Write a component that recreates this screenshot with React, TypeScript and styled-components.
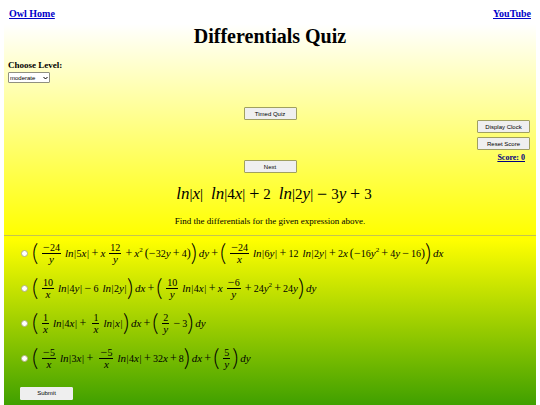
import React from "react";
import styled, { createGlobalStyle, css } from "styled-components";

const GlobalStyle = createGlobalStyle`
  * { box-sizing: border-box; }
  body {
    margin: 0;
    background: #fff;
    color: #000;
    font-family: "Liberation Serif", "Times New Roman", serif;
  }
`;

const Page = styled.div`
  display: flex;
  flex-direction: column;
  height: 100vh;
  margin: 0 4px;
  overflow: hidden;
`;

const Upper = styled.section`
  background: linear-gradient(#fff 24px, #ff0 100%);
`;

const Nav = styled.nav`
  display: flex;
  justify-content: space-between;
  padding: 8px 5px 0;
`;

const NavLink = styled.a`
  color: #0000c8;
  font-size: 10px;
  font-weight: bold;
  line-height: 12px;
`;

const Title = styled.h1`
  margin: 4px 0 12px;
  font-size: 20px;
  line-height: 24px;
  text-align: center;
`;

const Level = styled.div`
  display: flex;
  flex-direction: column;
  align-items: flex-start;
  gap: 1px;
  padding-left: 4px;
`;

const LevelLabel = styled.label`
  font-size: 9px;
  font-weight: bold;
  line-height: 11px;
`;

const SelectBox = styled.div`
  display: grid;
  align-items: center;

  > * { grid-area: 1 / 1; }
`;

const Select = styled.select`
  appearance: none;
  width: 42px;
  height: 11px;
  padding: 0 1px;
  border: 1px solid #909080;
  border-radius: 1px;
  background: #fff;
  color: #000;
  font-family: "Liberation Sans", Arial, sans-serif;
  font-size: 6px;
`;

const Chevron = styled.svg`
  justify-self: end;
  margin-right: 2px;
  pointer-events: none;
`;

const Controls = styled.div`
  display: grid;
  grid-template-columns: 1fr auto 1fr;
  padding: 24px 6px 0;
`;

const Centre = styled.div`
  display: flex;
  grid-column: 2;
  flex-direction: column;
  gap: 40px;
`;

const Side = styled.div`
  display: flex;
  flex-direction: column;
  align-items: flex-end;
  gap: 4px;
  padding-top: 13px;
`;

const Button = styled.button<{ $flat?: boolean }>`
  width: 53px;
  height: 13px;
  padding: 0;
  border: 1px solid ${(p) => (p.$flat ? "#efefef" : "#a0a060")};
  border-radius: 1px;
  background: #efefef;
  color: #000;
  font-family: "Liberation Sans", Arial, sans-serif;
  font-size: 6px;
  line-height: 10px;
`;

const Score = styled.div`
  padding-right: 5px;
  color: #000080;
  font-size: 8px;
  font-weight: bold;
  line-height: 8px;
  text-decoration: underline;
`;

const Prompt = styled.p`
  margin: 12px 0 8px;
  font-size: 9px;
  line-height: 12px;
  text-align: center;
`;

const Rule = styled.hr`
  margin: 0;
  border: 0;
  border-top: 1px solid #c4c450;
`;

const Lower = styled.form`
  flex: 1;
  background: linear-gradient(#ff0 4px, #008000 224px);
`;

const Option = styled.label`
  display: flex;
  align-items: center;
  gap: 4px;
  height: 35px;
  padding-left: 17px;
`;

const Radio = styled.input`
  appearance: none;
  width: 7px;
  height: 7px;
  margin: 0;
  border: 1px solid #b0b080;
  border-radius: 50%;
  background: #fff;

  &:checked { background: radial-gradient(#0075ff 2px, #fff 3px); }
`;

const SubmitRow = styled.div`
  padding: 5px 16px;
`;

const Formula = styled.div<{ $large?: boolean }>`
  display: flex;
  align-items: center;
  white-space: pre;
  ${(p) =>
    p.$large
      ? css`
          justify-content: center;
          margin-top: 12px;
          font-size: 15px;
          line-height: 18px;
          --variable: 17px;
          --operator: 18px;
          --operator-width: 12px;
          --operator-gap: 3px;
          --space: 4px;
        `
      : css`
          font-size: 10px;
          line-height: 11px;
          --variable: 11px;
          --operator: 12px;
          --operator-width: 7px;
          --operator-gap: 2px;
          --space: 2px;
        `}
`;

const Variable = styled.i`
  font-size: var(--variable);
`;

const Operator = styled.span<{ $unary?: boolean }>`
  width: var(--operator-width);
  margin: 0 ${(p) => (p.$unary ? "0" : "var(--operator-gap)")};
  font-size: var(--operator);
  text-align: center;
`;

const Bar = styled.span`
  width: 3px;
  text-align: center;
`;

const Space = styled.span`
  width: var(--space);
`;

const Big = styled.span`
  width: 6px;
  padding-bottom: 4px;
  font-family: Lato, "Liberation Serif", serif;
  font-size: 24px;
  font-weight: 300;
  line-height: 26px;
  text-align: center;
`;

const Small = styled.span`
  width: 4px;
  font-size: 12px;
`;

const Power = styled.sup`
  margin-bottom: 8px;
  font-size: 7px;
  line-height: 8px;
`;

const Fraction = styled.span`
  display: flex;
  flex-direction: column;
  align-items: center;
  margin: 0 2px 0 4px;
`;

const Numerator = styled.span`
  display: flex;
  align-items: center;
  padding: 0 1px;
  border-bottom: 1px solid currentColor;
`;

const Frac = ({ top, bottom }: { top: string; bottom: string }) => (
  <Fraction>
    <Numerator>
      {top.startsWith("-") && <Operator $unary>−</Operator>}
      {top.replace("-", "")}
    </Numerator>
    <Variable>{bottom}</Variable>
  </Fraction>
);

/* Splits plain notation into typeset pieces: [ and ] are tall brackets,
   ~ is a gap, {a/b} is a fraction, ^ starts a power, m is a leading minus. */
const Maths = ({ source, large }: { source: string; large?: boolean }) => (
  <Formula $large={large}>
    {(source.match(/\{[^}]+\}|\^\d|\d+|[a-ln-z]+|./g) || []).map((part, i) => {
      if (part[0] === "{") {
        const [top, bottom] = part.slice(1, -1).split("/");
        return <Frac key={i} top={top} bottom={bottom} />;
      }
      if (part[0] === "^") return <Power key={i}>{part[1]}</Power>;
      if (/\d/.test(part)) return <span key={i}>{part}</span>;
      if (/[a-ln-z]/.test(part)) return <Variable key={i}>{part}</Variable>;
      if (part === "+") return <Operator key={i}>+</Operator>;
      if (part === "-") return <Operator key={i}>−</Operator>;
      if (part === "m") return <Operator key={i} $unary>−</Operator>;
      if (part === "|") return <Bar key={i}>|</Bar>;
      if (part === "~") return <Space key={i} />;
      if (part === "[") return <Big key={i}>(</Big>;
      if (part === "]") return <Big key={i}>)</Big>;
      return <Small key={i}>{part}</Small>;
    })}
  </Formula>
);

const options = [
  "[{-24/y}~ln|5x|+x{12/y}+x^2~(m32y+4)]~dy+[{-24/x}~ln|6y|+12~~ln|2y|+2x~(m16y^2+4y-16)]~dx",
  "[{10/x}~ln|4y|-6~~ln|2y|]~dx+[{10/y}~ln|4x|+x{-6/y}+24y^2+24y]~dy",
  "[{1/x}~ln|4x|+{1/x}~ln|x|]~dx+[{2/y}-3]~dy",
  "[{-5/x}~ln|3x|+{-5/x}~ln|4x|+32x+8]~dx+[{5/y}]~dy",
];

export default function App() {
  return (
    <>
      <GlobalStyle />
      <Page>
        <Upper>
          <Nav>
            <NavLink href="#home">Owl Home</NavLink>
            <NavLink href="#youtube">YouTube</NavLink>
          </Nav>
          <Title>Differentials Quiz</Title>
          <Level>
            <LevelLabel htmlFor="level">Choose Level:</LevelLabel>
            <SelectBox>
              <Select id="level" defaultValue="moderate">
                <option>easy</option>
                <option>moderate</option>
                <option>hard</option>
              </Select>
              <Chevron width="5" height="4" viewBox="0 0 5 4" aria-hidden>
                <path d="M.5 1l2 2 2-2" fill="none" stroke="#000" />
              </Chevron>
            </SelectBox>
          </Level>
          <Controls>
            <Centre>
              <Button type="button">Timed Quiz</Button>
              <Button type="button">Next</Button>
            </Centre>
            <Side>
              <Button type="button">Display Clock</Button>
              <Button type="button">Reset Score</Button>
              <Score>Score: 0</Score>
            </Side>
          </Controls>
          <Maths large source="~~ln|x|~~ln|4x|+2~~ln|2y|-3y+3" />
          <Prompt>Find the differentials for the given expression above.</Prompt>
        </Upper>
        <Rule />
        <Lower onSubmit={(e) => e.preventDefault()}>
          {options.map((source) => (
            <Option key={source}>
              <Radio type="radio" name="answer" value={source} />
              <Maths source={source} />
            </Option>
          ))}
          <SubmitRow>
            <Button type="submit" $flat>Submit</Button>
          </SubmitRow>
        </Lower>
      </Page>
    </>
  );
}
